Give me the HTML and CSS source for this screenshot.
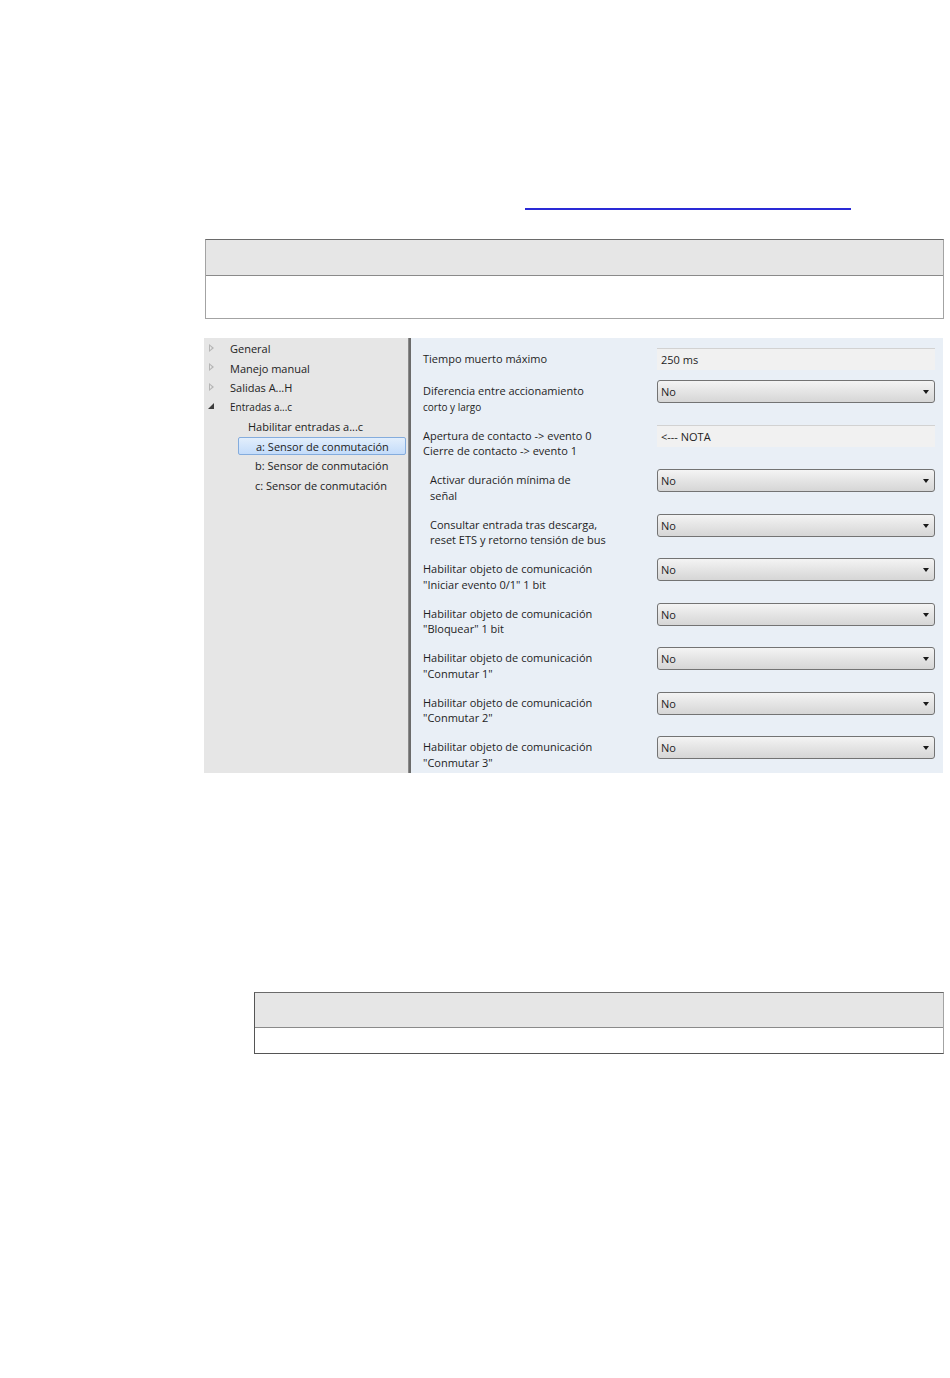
FILE: index.html
```html
<!DOCTYPE html>
<html lang="es">
<head>
  <meta charset="UTF-8">
  <title>Entradas a...c - Sensor de conmutación</title>
  <link rel="stylesheet" href="styles.css">
</head>
<body>

  <div class="link-line"></div>

  <div class="info-table info-top">
    <div class="info-head"></div>
    <div class="info-body"></div>
  </div>

  <div class="screen">
    <nav class="tree">
      <div class="tree-item"><span class="arrow closed"></span>General</div>
      <div class="tree-item"><span class="arrow closed"></span>Manejo manual</div>
      <div class="tree-item"><span class="arrow closed"></span>Salidas A...H</div>
      <div class="tree-item small"><span class="arrow open"></span>Entradas a...c</div>
      <div class="tree-item level2">Habilitar entradas a...c</div>
      <div class="tree-item level3 selected">a: Sensor de conmutación</div>
      <div class="tree-item level3">b: Sensor de conmutación</div>
      <div class="tree-item level3">c: Sensor de conmutación</div>
    </nav>

    <div class="splitter"></div>

    <div class="params">
      <div class="row first">
        <div class="label">Tiempo muerto máximo</div>
        <div class="field">250 ms</div>
      </div>
      <div class="row">
        <div class="label">Diferencia entre accionamiento<br><span class="small">corto y largo</span></div>
        <div class="select">No</div>
      </div>
      <div class="row">
        <div class="label">Apertura de contacto -&gt; evento 0<br>Cierre de contacto -&gt; evento 1</div>
        <div class="field">&lt;--- NOTA</div>
      </div>
      <div class="row">
        <div class="label indent">Activar duración mínima de<br>señal</div>
        <div class="select">No</div>
      </div>
      <div class="row">
        <div class="label indent">Consultar entrada tras descarga,<br>reset ETS y retorno tensión de bus</div>
        <div class="select">No</div>
      </div>
      <div class="row">
        <div class="label">Habilitar objeto de comunicación<br>"Iniciar evento 0/1" 1 bit</div>
        <div class="select">No</div>
      </div>
      <div class="row">
        <div class="label">Habilitar objeto de comunicación<br>"Bloquear" 1 bit</div>
        <div class="select">No</div>
      </div>
      <div class="row">
        <div class="label">Habilitar objeto de comunicación<br>"Conmutar 1"</div>
        <div class="select">No</div>
      </div>
      <div class="row">
        <div class="label">Habilitar objeto de comunicación<br>"Conmutar 2"</div>
        <div class="select">No</div>
      </div>
      <div class="row last">
        <div class="label">Habilitar objeto de comunicación<br>"Conmutar 3"</div>
        <div class="select">No</div>
      </div>
    </div>
  </div>

  <div class="info-table info-bottom">
    <div class="info-head"></div>
    <div class="info-body"></div>
  </div>

</body>
</html>
```

FILE: styles.css
```css
body {
  margin: 0;
  padding: 0;
  background-color: #fff;
  font-family: 'Open Sans', 'Liberation Sans', sans-serif;
  color: #1e1e1e;
}

/* línea de enlace vacía */
.link-line {
  margin: 208px 0 0 525px;
  width: 326px;
  border-top: 2px solid #2a2ad6;
}

.info-table {
  border: 1px solid #a3a3a3;
  border-top-color: #6a6a6a;
  background-color: #fff;
}

.info-head {
  background-color: #e6e6e6;
  border-bottom: 1px solid #8a8a8a;
}

.info-top {
  margin: 29px 0 0 205px;
  width: 737px;
}

.info-top .info-head {
  height: 35px;
}

.info-top .info-body {
  height: 42px;
}

.info-bottom {
  margin: 219px 0 0 254px;
  width: 688px;
  border-left-color: #555;
  border-bottom-color: #555;
}

.info-bottom .info-head {
  height: 34px;
}

.info-bottom .info-body {
  height: 25px;
}

/* captura de la ventana */
.screen {
  display: grid;
  grid-template-columns: 204px 3px 1fr;
  grid-template-rows: 435px;
  margin: 19px 0 0 204px;
  width: 739px;
  height: 435px;
  overflow: hidden;
  font-size: 11px;
}

.tree {
  background-color: #e6e6e6;
  padding-top: 1px;
  color: #222;
}

.tree-item {
  display: flex;
  align-items: center;
  height: 19.5px;
  padding-left: 3px;
  white-space: nowrap;
}

.tree-item.small {
  font-size: 10px;
}

.arrow {
  display: inline-block;
  width: 23px;
  height: 8px;
  position: relative;
}

.arrow.closed::before {
  content: '';
  position: absolute;
  left: 2px;
  top: -1px;
  border-left: 5px solid #b5b5b5;
  border-top: 4.5px solid transparent;
  border-bottom: 4.5px solid transparent;
}

.arrow.closed::after {
  content: '';
  position: absolute;
  left: 3px;
  top: 1px;
  border-left: 2.5px solid #e6e6e6;
  border-top: 2.5px solid transparent;
  border-bottom: 2.5px solid transparent;
}

.arrow.open::before {
  content: '';
  position: absolute;
  left: 1px;
  top: 0;
  border-right: 6px solid #3c3c3c;
  border-top: 6px solid transparent;
}

.tree-item.level2 {
  padding-left: 44px;
}

.tree-item.level3 {
  margin-left: 34px;
  padding-left: 17px;
  width: 150px;
  box-sizing: border-box;
}

.tree-item.selected {
  height: 18px;
  margin-top: 0.75px;
  margin-bottom: 0.75px;
  padding-left: 17px;
  border: 1px solid #84acdd;
  border-radius: 2px;
  background: linear-gradient(#e2eefc, #c4dcfa);
  width: 168px;
}

.splitter {
  background-color: #6b6b6b;
  border-left: 1px solid #8a8a8a;
}

.params {
  background-color: #e9eff6;
  padding: 10px 0 0 12px;
  overflow: hidden;
}

.row {
  display: grid;
  grid-template-columns: 234px 278px;
  height: 44.5px;
}

.row.first {
  height: 32px;
}

.row.last {
  height: 37px;
}

.label {
  line-height: 15.5px;
  padding-top: 3px;
  white-space: nowrap;
}

.label .small {
  font-size: 10px;
}

.label.indent {
  padding-left: 7px;
}

.field {
  height: 22px;
  line-height: 22px;
  padding-left: 4px;
  background-color: #f1f1f1;
  border-top: 1px solid #d2d2d2;
  box-sizing: border-box;
}

.select {
  position: relative;
  height: 23px;
  line-height: 21px;
  padding-left: 3px;
  border: 1px solid #737373;
  border-radius: 3px;
  background: linear-gradient(#f4f4f4, #e6e6e6 45%, #d6d6d6);
  box-sizing: border-box;
}

.select::after {
  content: '';
  position: absolute;
  right: 5px;
  top: 9px;
  border-left: 3.5px solid transparent;
  border-right: 3.5px solid transparent;
  border-top: 4px solid #1a1a1a;
}
```
